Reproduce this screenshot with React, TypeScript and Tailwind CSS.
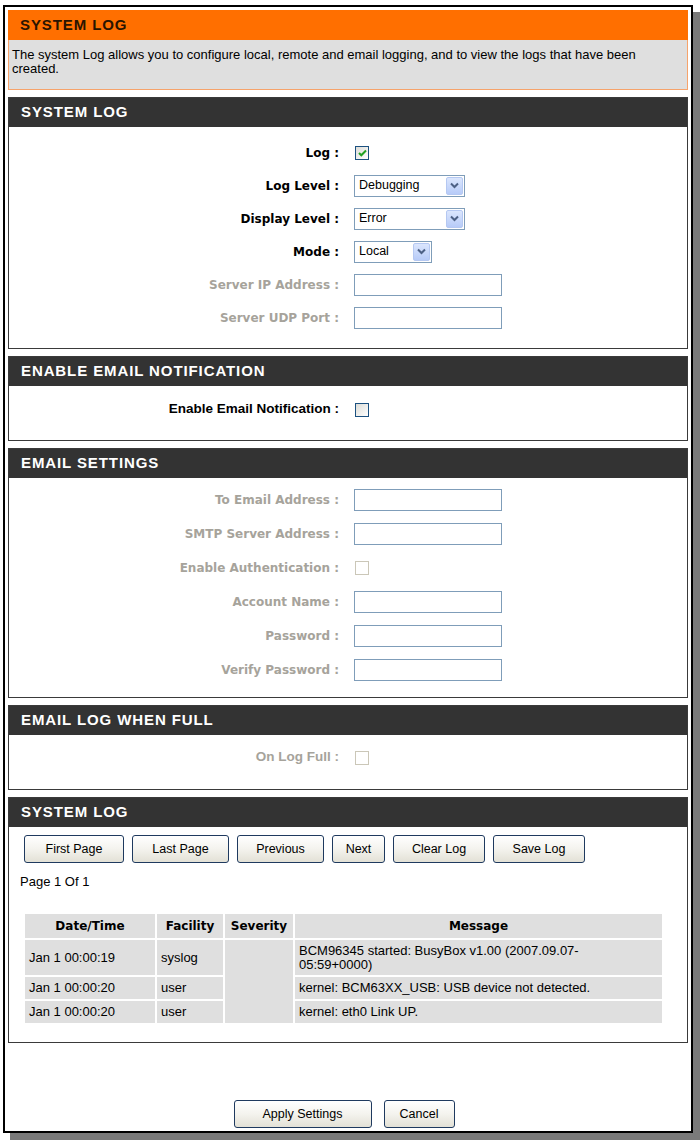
import type { ReactNode } from "react";

const sans = "font-['Liberation_Sans',Arial,sans-serif]";
const verdana = "font-['DejaVu_Sans',Verdana,sans-serif]";

function Bar({ title }: { title: string }) {
  return (
    <div className="h-[29px] bg-[#333333] flex items-center pl-3 text-white font-bold text-[15px] tracking-[0.9px] font-['Liberation_Sans',Arial,sans-serif]">
      {title}
    </div>
  );
}

function Section({ title, children, className = "" }: { title: string; children: ReactNode; className?: string }) {
  return (
    <div className="border border-[#3a3a3a] bg-white">
      <Bar title={title} />
      <div className={className}>{children}</div>
    </div>
  );
}

function Row({
  label,
  off,
  narrow,
  h = "h-[33px]",
  children,
}: {
  label: string;
  off?: boolean;
  narrow?: boolean;
  h?: string;
  children: ReactNode;
}) {
  return (
    <div className={`flex items-center ${h}`}>
      <div
        className={`w-[330px] text-right font-bold ${
          narrow ? "text-[13.5px] " + sans : "text-[12px] " + verdana
        } ${off ? "text-[#a6a39b]" : "text-black"}`}
      >
        {label}
      </div>
      <div className="ml-[15px] flex items-center">{children}</div>
    </div>
  );
}

function TextBox() {
  return <div className="w-[148px] h-[22px] border border-[#7f9db9] bg-white" />;
}

function Check({ checked, off }: { checked?: boolean; off?: boolean }) {
  return (
    <div
      className={`w-[14px] h-[14px] ml-[1px] border flex items-center justify-center ${
        off ? "border-[#cbc7b8] bg-white" : "border-[#1c5180] bg-gradient-to-br from-[#dcdcd7] to-white"
      }`}
    >
      {checked && (
        <svg width="9" height="8" viewBox="0 0 9 8">
          <path d="M1 4 L3.3 6.3 L8 1.5" fill="none" stroke="#21a121" strokeWidth="2" />
        </svg>
      )}
    </div>
  );
}

function Select({ value, w }: { value: string; w: string }) {
  return (
    <div className={`${w} h-[22px] border border-[#7f9db9] bg-white flex items-center justify-between p-[1px]`}>
      <span className={`pl-[3px] text-[12.5px] text-black ${sans}`}>{value}</span>
      <div className="w-[17px] h-[18px] rounded-[2px] border border-[#b5c8f2] bg-gradient-to-b from-[#dbe6fd] to-[#b7cbf8] flex items-center justify-center">
        <svg width="9" height="7" viewBox="0 0 9 7">
          <path d="M1 1.5 L4.5 5 L8 1.5" fill="none" stroke="#4d6185" strokeWidth="2" />
        </svg>
      </div>
    </div>
  );
}

function Btn({ label, w }: { label: string; w: string }) {
  return (
    <button
      className={`${w} h-[28px] rounded-[3px] border border-[#1f3a5f] bg-gradient-to-b from-white via-[#f4f3ee] to-[#e3e1d6] text-[12.5px] text-black ${sans}`}
    >
      {label}
    </button>
  );
}

const rows = [
  {
    d: "Jan 1 00:00:19",
    f: "syslog",
    m: (
      <>
        BCM96345 started: BusyBox v1.00 (2007.09.07-
        <br />
        05:59+0000)
      </>
    ),
    h: "h-[35px]",
  },
  { d: "Jan 1 00:00:20", f: "user", m: "kernel: BCM63XX_USB: USB device not detected.", h: "h-[22px]" },
  { d: "Jan 1 00:00:20", f: "user", m: "kernel: eth0 Link UP.", h: "h-[22px]" },
];

export default function App() {
  return (
    <div className="w-[700px] h-[1140px] bg-white relative overflow-hidden">
      <div className="ml-[3px] mt-[5px] w-[690px] h-[1128px] border-2 border-black bg-white px-[3px] pt-[3px] shadow-[7px_7px_0_#7a7a7a]">
        {/* intro */}
        <div className="h-[30px] bg-[#ff6f00] flex items-center pl-3 font-bold text-[15px] tracking-[0.9px] text-[#2a1400] font-['Liberation_Sans',Arial,sans-serif]">
          SYSTEM LOG
        </div>
        <div className={`h-[50px] bg-[#dfdfdf] border border-t-0 border-[#f6a36b] px-[3px] pt-[8px] text-[13px] leading-[14px] text-black ${sans}`}>
          The system Log allows you to configure local, remote and email logging, and to view the logs that have been
          <br />
          created.
        </div>

        <div className="mt-[7px] flex flex-col gap-[7px]">
          <Section title="SYSTEM LOG" className="pt-[9px] pb-[14px]">
            <Row label="Log :">
              <Check checked />
            </Row>
            <Row label="Log Level :">
              <Select value="Debugging" w="w-[111px]" />
            </Row>
            <Row label="Display Level :">
              <Select value="Error" w="w-[111px]" />
            </Row>
            <Row label="Mode :">
              <Select value="Local" w="w-[78px]" />
            </Row>
            <Row label="Server IP Address :" off>
              <TextBox />
            </Row>
            <Row label="Server UDP Port :" off>
              <TextBox />
            </Row>
          </Section>

          <Section title="ENABLE EMAIL NOTIFICATION" className="pt-[7px] pb-[14px]">
            <Row label="Enable Email Notification :" narrow>
              <Check />
            </Row>
          </Section>

          <Section title="EMAIL SETTINGS" className="pt-[5px] pb-[10px]">
            <Row label="To Email Address :" off h="h-[34px]">
              <TextBox />
            </Row>
            <Row label="SMTP Server Address :" off h="h-[34px]">
              <TextBox />
            </Row>
            <Row label="Enable Authentication :" off h="h-[34px]">
              <Check off />
            </Row>
            <Row label="Account Name :" off h="h-[34px]">
              <TextBox />
            </Row>
            <Row label="Password :" off h="h-[34px]">
              <TextBox />
            </Row>
            <Row label="Verify Password :" off h="h-[34px]">
              <TextBox />
            </Row>
          </Section>

          <Section title="EMAIL LOG WHEN FULL" className="pt-[6px] pb-[15px]">
            <Row label="On Log Full :" off narrow>
              <Check off />
            </Row>
          </Section>

          <Section title="SYSTEM LOG" className="pt-[8px] pb-[17px]">
            <div className="pl-[15px] flex gap-[8px]">
              <Btn label="First Page" w="w-[100px]" />
              <Btn label="Last Page" w="w-[97px]" />
              <Btn label="Previous" w="w-[87px]" />
              <Btn label="Next" w="w-[53px]" />
              <Btn label="Clear Log" w="w-[92px]" />
              <Btn label="Save Log" w="w-[92px]" />
            </div>
            <div className={`pl-[11px] mt-[12px] text-[13px] leading-[14px] text-black ${sans}`}>Page 1 Of 1</div>
            <table className="ml-[14px] mt-[23px] w-[641px] table-fixed border-separate border-spacing-[2px]">
              <colgroup>
                <col className="w-[130px]" />
                <col className="w-[66px]" />
                <col className="w-[68px]" />
                <col />
              </colgroup>
              <thead>
                <tr className={`h-[24px] text-[12px] font-bold text-black ${verdana}`}>
                  <th className="bg-[#dfdfdf]">Date/Time</th>
                  <th className="bg-[#dfdfdf]">Facility</th>
                  <th className="bg-[#dfdfdf]">Severity</th>
                  <th className="bg-[#dfdfdf]">Message</th>
                </tr>
              </thead>
              <tbody className={`text-[13px] leading-[14px] text-black ${sans}`}>
                {rows.map((r, i) => (
                  <tr key={i} className={r.h}>
                    <td className="bg-[#dfdfdf] px-[4px]">{r.d}</td>
                    <td className="bg-[#dfdfdf] px-[4px]">{r.f}</td>
                    {i === 0 && <td rowSpan={3} className="bg-[#dfdfdf]" />}
                    <td className="bg-[#dfdfdf] px-[4px]">{r.m}</td>
                  </tr>
                ))}
              </tbody>
            </table>
          </Section>
        </div>

        <div className="mt-[57px] flex justify-center gap-[12px] pr-[8px]">
          <Btn label="Apply Settings" w="w-[138px]" />
          <Btn label="Cancel" w="w-[71px]" />
        </div>
      </div>
    </div>
  );
}
